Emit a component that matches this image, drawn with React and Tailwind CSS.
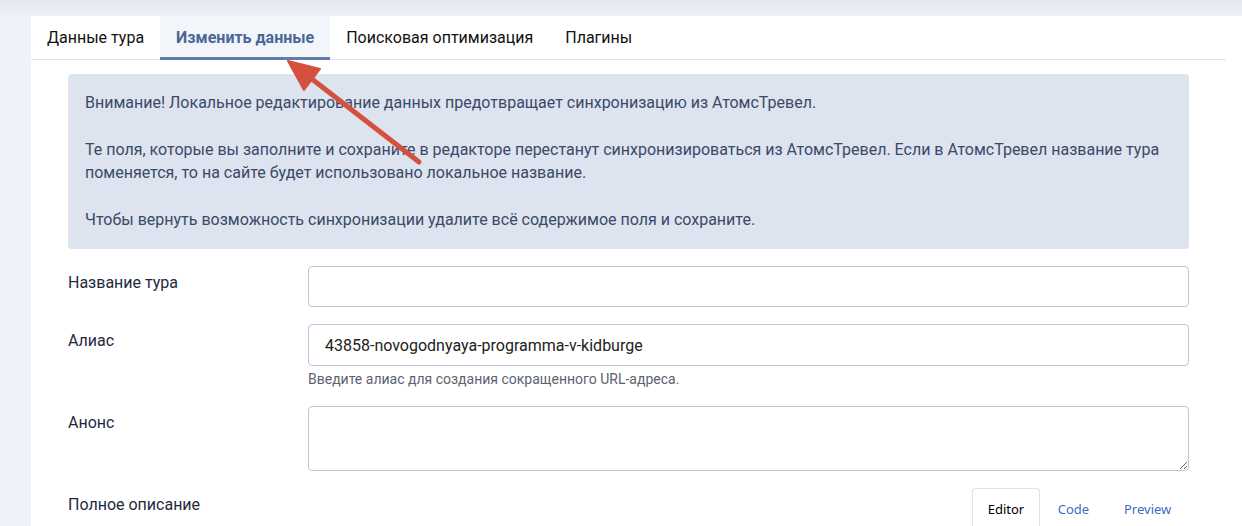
import React from 'react';

const tabs = ['Данные тура', 'Изменить данные', 'Поисковая оптимизация', 'Плагины'];

const FormRow = ({ label, children }) => (
    <div className='flex'>
        <div className='w-[240px] shrink-0 pt-[5px] text-[16px] leading-[24px] text-[#1f2a3d]'>{label}</div>
        <div className='flex-1'>{children}</div>
    </div>
);

const Arrow = () => (
    <svg className='absolute left-0 top-0 pointer-events-none' width='1242' height='526'>
        <line x1='419' y1='162' x2='308' y2='76' stroke='#d4503f' strokeWidth='5' strokeLinecap='round' />
        <polygon points='288,61 320,69 304,90' fill='#d4503f' stroke='#d4503f' strokeWidth='2' strokeLinejoin='round' />
    </svg>
);

const App = () => {
    const active = 1;

    return (
        <div className='relative h-[526px] overflow-hidden bg-[#eef2f9] font-["Roboto",sans-serif]'>
            <div className='h-4 bg-gradient-to-b from-[#e3e8f1] to-[#edf1f9]' />
            <div className='ml-[31px] bg-white pr-4 h-full'>
                <div className='flex h-[44px] border-b border-[#dfe4eb]'>
                    {tabs.map((tab, i) => (
                        <div
                            key={tab}
                            className={
                                i === active
                                    ? 'px-4 flex items-center text-[16px] font-bold text-[#4a6797] bg-[#f2f5f9] border-b-[3px] border-[#5f7caa] -mb-px pt-[3px]'
                                    : 'px-4 flex items-center text-[16px] text-[#111]'
                            }
                        >
                            {tab}
                        </div>
                    ))}
                </div>

                <div className='px-[37px] pt-[14px]'>
                    <div className='bg-[#dde3ef] rounded-[4px] px-[17px] pt-[17px] pb-[18px] text-[16px] leading-[23px] text-[#3a4a67] space-y-[24px]'>
                        <p>Внимание! Локальное редактирование данных предотвращает синхронизацию из АтомсТревел.</p>
                        <p>
                            Те поля, которые вы заполните и сохраните в редакторе перестанут синхронизироваться из АтомсТревел. Если в АтомсТревел название тура поменяется, то на сайте будет использовано локальное название.
                        </p>
                        <p>Чтобы вернуть возможность синхронизации удалите всё содержимое поля и сохраните.</p>
                    </div>

                    <div className='mt-[17px] flex flex-col gap-[17px]'>
                        <FormRow label='Название тура'>
                            <input
                                type='text'
                                className='w-full h-[41px] border border-[#b9c7de] rounded-[4px] px-4 text-[16px] outline-none'
                            />
                        </FormRow>
                        <FormRow label='Алиас'>
                            <input
                                type='text'
                                defaultValue='43858-novogodnyaya-programma-v-kidburge'
                                className='w-full h-[42px] border border-[#b9c7de] rounded-[4px] px-4 text-[16px] text-[#222] outline-none'
                            />
                            <div className='mt-[3px] text-[14px] leading-[20px] text-[#5b6371]'>
                                Введите алиас для создания сокращенного URL-адреса.
                            </div>
                        </FormRow>
                        <FormRow label='Анонс'>
                            <textarea className='block w-full h-[65px] border border-[#b9c7de] rounded-[4px] px-4 py-2 text-[16px] outline-none' />
                        </FormRow>
                        <FormRow label='Полное описание'>
                            <div className='flex justify-end font-["Noto_Sans",sans-serif] text-[13px]'>
                                <div className='w-[68px] text-center pt-[11px] h-[60px] border border-b-0 border-[#dee2e6] rounded-t-[4px] text-black'>Editor</div>
                                <div className='w-[67px] text-center pt-[12px] text-[#3d6dc2]'>Code</div>
                                <div className='w-[82px] pl-[17px] pt-[12px] text-[#3d6dc2]'>Preview</div>
                            </div>
                        </FormRow>
                    </div>
                </div>
            </div>
            <Arrow />
        </div>
    );
};

export default App;
